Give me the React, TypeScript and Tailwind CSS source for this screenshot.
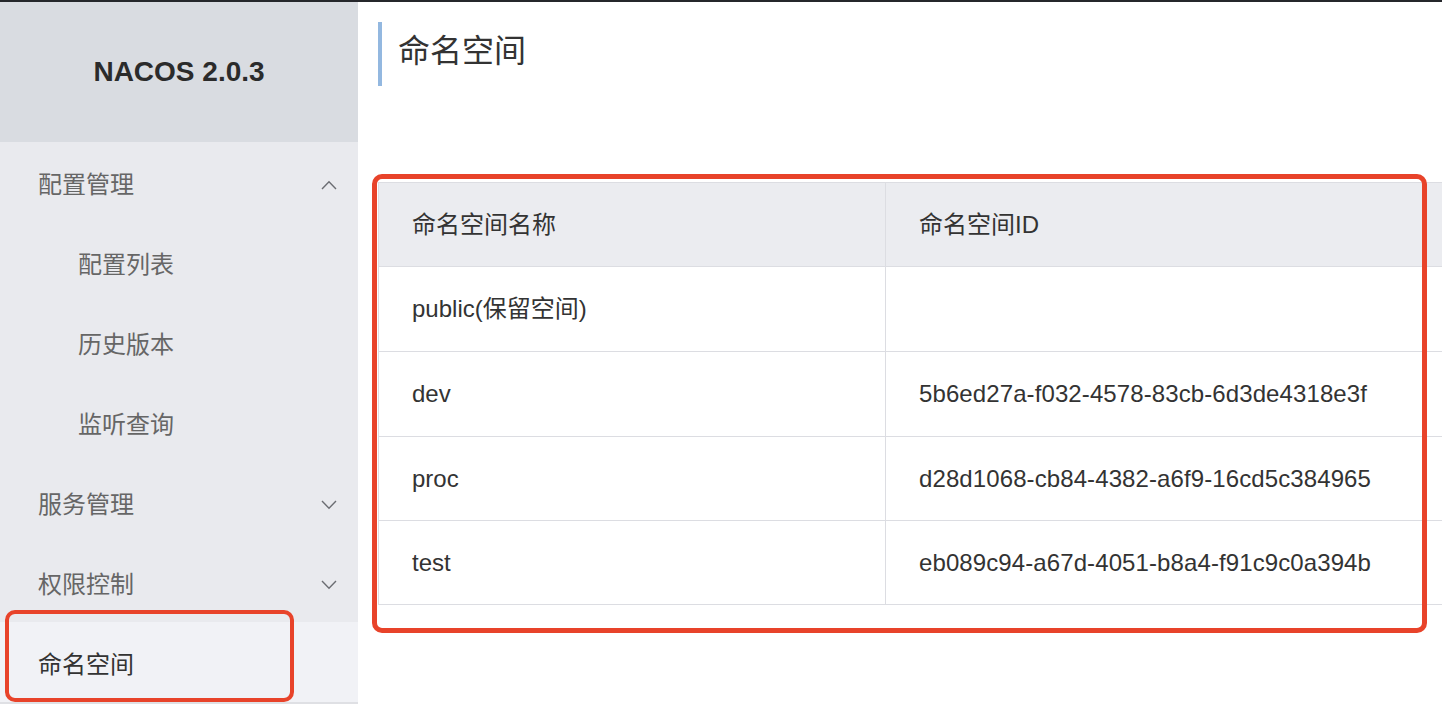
import React from "react";

const font = { fontFamily: '"Liberation Sans", "Noto Sans CJK SC", sans-serif' };

function Chevron({ up }: { up?: boolean }) {
  return (
    <svg width="16" height="10" viewBox="0 0 16 10" className="text-[#6b6d72]">
      {up ? (
        <path d="M1 9 L8 1.8 L15 9" fill="none" stroke="currentColor" strokeWidth="1.4" />
      ) : (
        <path d="M1 1 L8 8.2 L15 1" fill="none" stroke="currentColor" strokeWidth="1.4" />
      )}
    </svg>
  );
}

function MenuItem({
  label,
  level = 1,
  chevron,
  selected,
}: {
  label: string;
  level?: number;
  chevron?: "up" | "down";
  selected?: boolean;
}) {
  return (
    <div
      className={`h-[80px] flex items-center justify-between pt-[6px] pr-[21px] ${
        level === 1 ? "pl-[38px]" : "pl-[78px]"
      } ${selected ? "bg-[#f1f2f6] text-[#333333]" : "text-[#666666]"} text-[24px]`}
    >
      <span>{label}</span>
      {chevron && <Chevron up={chevron === "up"} />}
    </div>
  );
}

const rows = [
  { name: "public(保留空间)", id: "", h: "h-[85px]" },
  { name: "dev", id: "5b6ed27a-f032-4578-83cb-6d3de4318e3f", h: "h-[85px]" },
  { name: "proc", id: "d28d1068-cb84-4382-a6f9-16cd5c384965", h: "h-[84px]" },
  { name: "test", id: "eb089c94-a67d-4051-b8a4-f91c9c0a394b", h: "h-[84px]" },
];

export default function App() {
  return (
    <div className="relative w-[1442px] h-[704px] overflow-hidden bg-white flex flex-col" style={font}>
      <div className="h-[2px] bg-[#25272b] shrink-0" />
      <div className="flex flex-1 min-h-0">
        {/* Sidebar */}
        <aside className="w-[358px] shrink-0 bg-[#e9eaee] flex flex-col">
          <div className="h-[140px] bg-[#d9dce1] flex items-center justify-center">
            <span className="text-[28px] font-bold text-[#2b2b2b]">NACOS 2.0.3</span>
          </div>
          <MenuItem label="配置管理" chevron="up" />
          <MenuItem label="配置列表" level={2} />
          <MenuItem label="历史版本" level={2} />
          <MenuItem label="监听查询" level={2} />
          <MenuItem label="服务管理" chevron="down" />
          <MenuItem label="权限控制" chevron="down" />
          <MenuItem label="命名空间" selected />
          <div className="h-[2px] bg-[#dfe0e4]" />
        </aside>

        {/* Main */}
        <main className="flex-1 min-w-0 pl-[20px] pt-[20px]">
          <div className="flex items-center h-[64px] border-l-4 border-[#93b8e0] pl-[16px]">
            <h1 className="text-[32px] text-[#333333] font-normal leading-none -mt-[6px]">命名空间</h1>
          </div>
          <div className="mt-[96px] w-[1200px] border-t border-l border-[#dcdde2] text-[24px] text-[#333333]">
            <div className="flex h-[84px] bg-[#ebecf0] border-b border-[#dcdde2]">
              <div className="w-[507px] border-r border-[#dcdde2] flex items-center pl-[33px]">命名空间名称</div>
              <div className="flex-1 flex items-center pl-[33px]">命名空间ID</div>
            </div>
            {rows.map((r) => (
              <div key={r.name} className={`flex ${r.h} border-b border-[#dcdde2]`}>
                <div className="w-[507px] border-r border-[#dcdde2] flex items-center pl-[33px]">{r.name}</div>
                <div className="flex-1 flex items-center pl-[33px] tracking-[0.1px]">{r.id}</div>
              </div>
            ))}
          </div>
        </main>
      </div>

      {/* Annotation overlays */}
      <div className="absolute left-[372px] top-[174px] w-[1055px] h-[459px] border-[5px] border-[#e8432a] rounded-[10px] pointer-events-none" />
      <div className="absolute left-[5px] top-[610px] w-[289px] h-[92px] border-[4px] border-[#e8432a] rounded-[10px] pointer-events-none" />
    </div>
  );
}
